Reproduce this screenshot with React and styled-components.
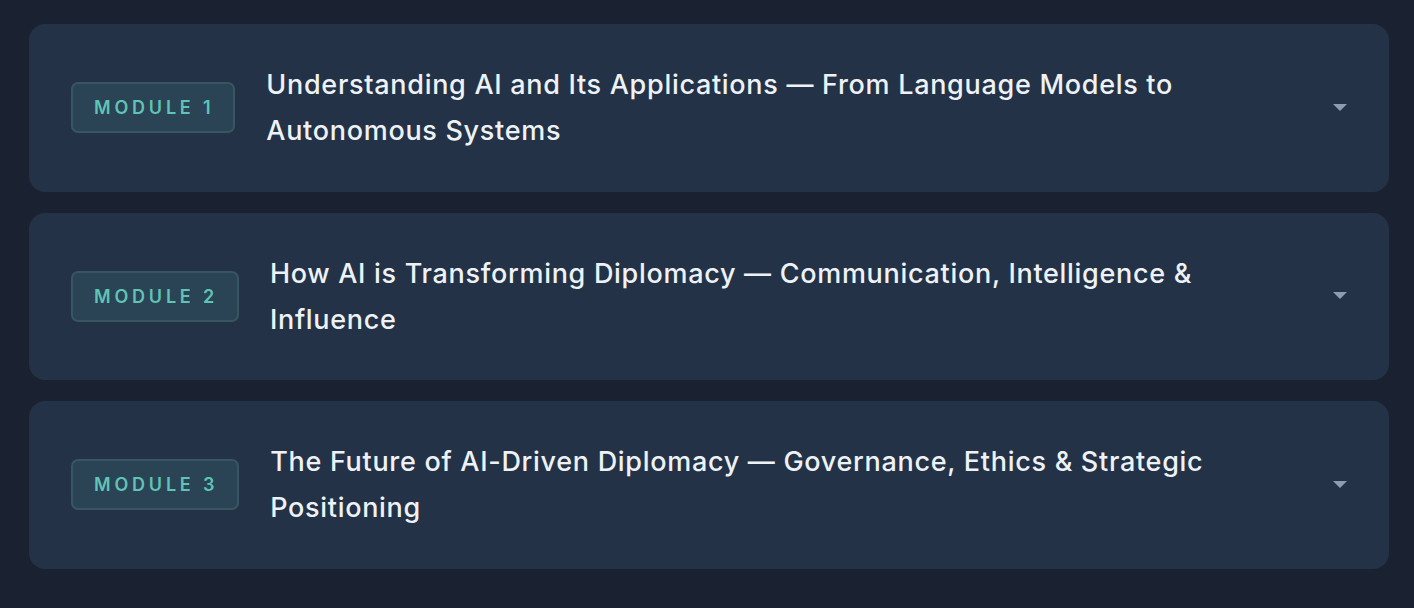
import React from "react";
import styled, { createGlobalStyle } from "styled-components";

const Global = createGlobalStyle`
  html, body { margin: 0; padding: 0; background: #1a2231; }
  body { font-family: Inter, "Open Sans", sans-serif; }
`;

const Page = styled.div`
  min-height: 608px;
  box-sizing: border-box;
  padding: 24px 25px 24px 29px;
  display: flex;
  flex-direction: column;
  gap: 21px;
  background: #1a2231;
`;

const Card = styled.div`
  background: #233246;
  border-radius: 16px;
  min-height: 167.5px;
  box-sizing: border-box;
  padding: 0 42px;
  display: flex;
  align-items: center;
  gap: 31px;
`;

const Badge = styled.span`
  flex: none;
  box-sizing: border-box;
  height: 51px;
  padding: 0 19px 0 21px;
  display: flex;
  align-items: center;
  background: #2a4355;
  border: 2px solid #37565f;
  border-radius: 7px;
  color: #5fc4b5;
  font-size: 18px;
  font-weight: 600;
  letter-spacing: 3.8px;
`;

const Title = styled.div`
  flex: 1;
  color: #eef2f7;
  font-size: 27px;
  font-weight: 500;
  line-height: 46px;
  max-width: 1000px;
  letter-spacing: 0.7px;
  padding-top: 1px;
`;

const Chevron = styled.svg`
  flex: none;
  margin-left: auto;
  width: 14px;
  height: 8px;
`;

const modules = [
  { n: 1, title: "Understanding AI and Its Applications — From Language Models to Autonomous Systems" },
  { n: 2, title: "How AI is Transforming Diplomacy — Communication, Intelligence & Influence" },
  { n: 3, title: "The Future of AI-Driven Diplomacy — Governance, Ethics & Strategic Positioning" },
];

export default function App() {
  return (
    <>
      <Global />
      <Page>
        {modules.map((m) => (
          <Card key={m.n}>
            <Badge>MODULE {m.n}</Badge>
            <Title>{m.title}</Title>
            <Chevron viewBox="0 0 14 8">
              <path d="M0 0 H14 L7 7 Z" fill="#8e9cb0" />
            </Chevron>
          </Card>
        ))}
      </Page>
    </>
  );
}
